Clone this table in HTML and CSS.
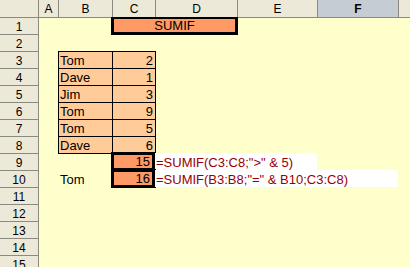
FILE: index.html
```html
<!DOCTYPE html>
<html>
<head>
<meta charset="utf-8">
<link rel="stylesheet" href="styles.css">
</head>
<body>
<div class="sheet">
  <div class="corner"></div>
  <div class="colhead first">A</div>
  <div class="colhead">B</div>
  <div class="colhead">C</div>
  <div class="colhead">D</div>
  <div class="colhead">E</div>
  <div class="colhead active">F</div>
  <div class="colhead"></div>

  <div class="rowhead first">1</div>
  <div class="cell"></div>
  <div class="cell"></div>
  <div class="cell title span2">SUMIF</div>
  <div class="cell"></div>
  <div class="cell"></div>
  <div class="cell"></div>

  <div class="rowhead">2</div>
  <div class="cell span7"></div>

  <div class="rowhead">3</div>
  <div class="cell"></div>
  <div class="cell peach">Tom</div>
  <div class="cell peach num">2</div>
  <div class="cell edge-l"></div>
  <div class="cell"></div>
  <div class="cell"></div>
  <div class="cell"></div>

  <div class="rowhead">4</div>
  <div class="cell"></div>
  <div class="cell peach">Dave</div>
  <div class="cell peach num">1</div>
  <div class="cell edge-l"></div>
  <div class="cell"></div>
  <div class="cell"></div>
  <div class="cell"></div>

  <div class="rowhead">5</div>
  <div class="cell"></div>
  <div class="cell peach">Jim</div>
  <div class="cell peach num">3</div>
  <div class="cell edge-l"></div>
  <div class="cell"></div>
  <div class="cell"></div>
  <div class="cell"></div>

  <div class="rowhead">6</div>
  <div class="cell"></div>
  <div class="cell peach">Tom</div>
  <div class="cell peach num">9</div>
  <div class="cell edge-l"></div>
  <div class="cell"></div>
  <div class="cell"></div>
  <div class="cell"></div>

  <div class="rowhead">7</div>
  <div class="cell"></div>
  <div class="cell peach">Tom</div>
  <div class="cell peach num">5</div>
  <div class="cell edge-l"></div>
  <div class="cell"></div>
  <div class="cell"></div>
  <div class="cell"></div>

  <div class="rowhead">8</div>
  <div class="cell"></div>
  <div class="cell peach">Dave</div>
  <div class="cell peach num">6</div>
  <div class="cell edge-l"></div>
  <div class="cell"></div>
  <div class="cell"></div>
  <div class="cell"></div>

  <div class="rowhead">9</div>
  <div class="cell"></div>
  <div class="cell edge-t"></div>
  <div class="cell result num">15</div>
  <div class="cell formula span2">=SUMIF(C3:C8;"&gt;" &amp; 5)</div>
  <div class="cell"></div>
  <div class="cell"></div>

  <div class="rowhead">10</div>
  <div class="cell"></div>
  <div class="cell">Tom</div>
  <div class="cell result num">16</div>
  <div class="cell formula span3">=SUMIF(B3:B8;"=" &amp; B10;C3:C8)</div>
  <div class="cell"></div>

  <div class="rowhead">11</div>
  <div class="cell span7"></div>
  <div class="rowhead">12</div>
  <div class="cell span7"></div>
  <div class="rowhead">13</div>
  <div class="cell span7"></div>
  <div class="rowhead">14</div>
  <div class="cell span7"></div>
  <div class="rowhead">15</div>
  <div class="cell span7"></div>
</div>
</body>
</html>
```

FILE: styles.css
```css
html, body {
  margin: 0;
  padding: 0;
  background: #ffffcc;
  overflow: hidden;
}

.sheet {
  width: 410px;
  height: 267px;
  display: grid;
  grid-template-columns: 39px 19px 54px 43px 82px 80px 81px 1fr;
  grid-template-rows: 18px 16px repeat(14, 17px);
  background: #ffffcc;
  font-family: "Liberation Sans", Arial, sans-serif;
  font-size: 13px;
  color: #000;
  overflow: hidden;
}

.corner {
  background: #ece9d8;
  border-right: 1px solid #8a8a80;
  border-bottom: 1px solid #8a8a80;
}

.colhead {
  background: #ece9d8;
  border-left: 1px solid #8a8a80;
  border-bottom: 1px solid #8a8a80;
  display: flex;
  align-items: center;
  justify-content: center;
  font-size: 12px;
  padding-top: 1px;
}

.colhead.first {
  border-left: none;
}

.colhead.active {
  background: #c6ccd3;
  font-weight: bold;
}

.rowhead {
  background: #ece9d8;
  border-right: 1px solid #8a8a80;
  border-top: 1px solid #8a8a80;
  display: flex;
  align-items: center;
  justify-content: center;
  font-size: 12px;
  padding-top: 1px;
}

.rowhead.first {
  border-top: none;
}

.cell {
  display: flex;
  align-items: center;
  padding: 1px 2px 0 2px;
  white-space: nowrap;
  min-width: 0;
}

.span2 { grid-column: span 2; }
.span3 { grid-column: span 3; }
.span7 { grid-column: span 7; }

.num {
  justify-content: flex-end;
}

.peach {
  background: #ffcc99;
  border-left: 1px solid #000;
  border-top: 1px solid #000;
  padding-left: 1px;
}

.edge-l {
  border-left: 1px solid #000;
}

.edge-t {
  border-top: 1px solid #000;
}

.title {
  background: #ff9966;
  border: 3px solid #000;
  border-top-width: 2px;
  margin: -1px -1px -1px -1px;
  justify-content: center;
  padding: 0;
}

.result {
  background: #ff9966;
  border: 3px solid #000;
  border-right-width: 4px;
  margin: -1px;
  padding: 0 2px 0 0;
}

.formula {
  background: #ffffff;
  color: #990000;
  padding: 1px 0 0 1px;
}
```
